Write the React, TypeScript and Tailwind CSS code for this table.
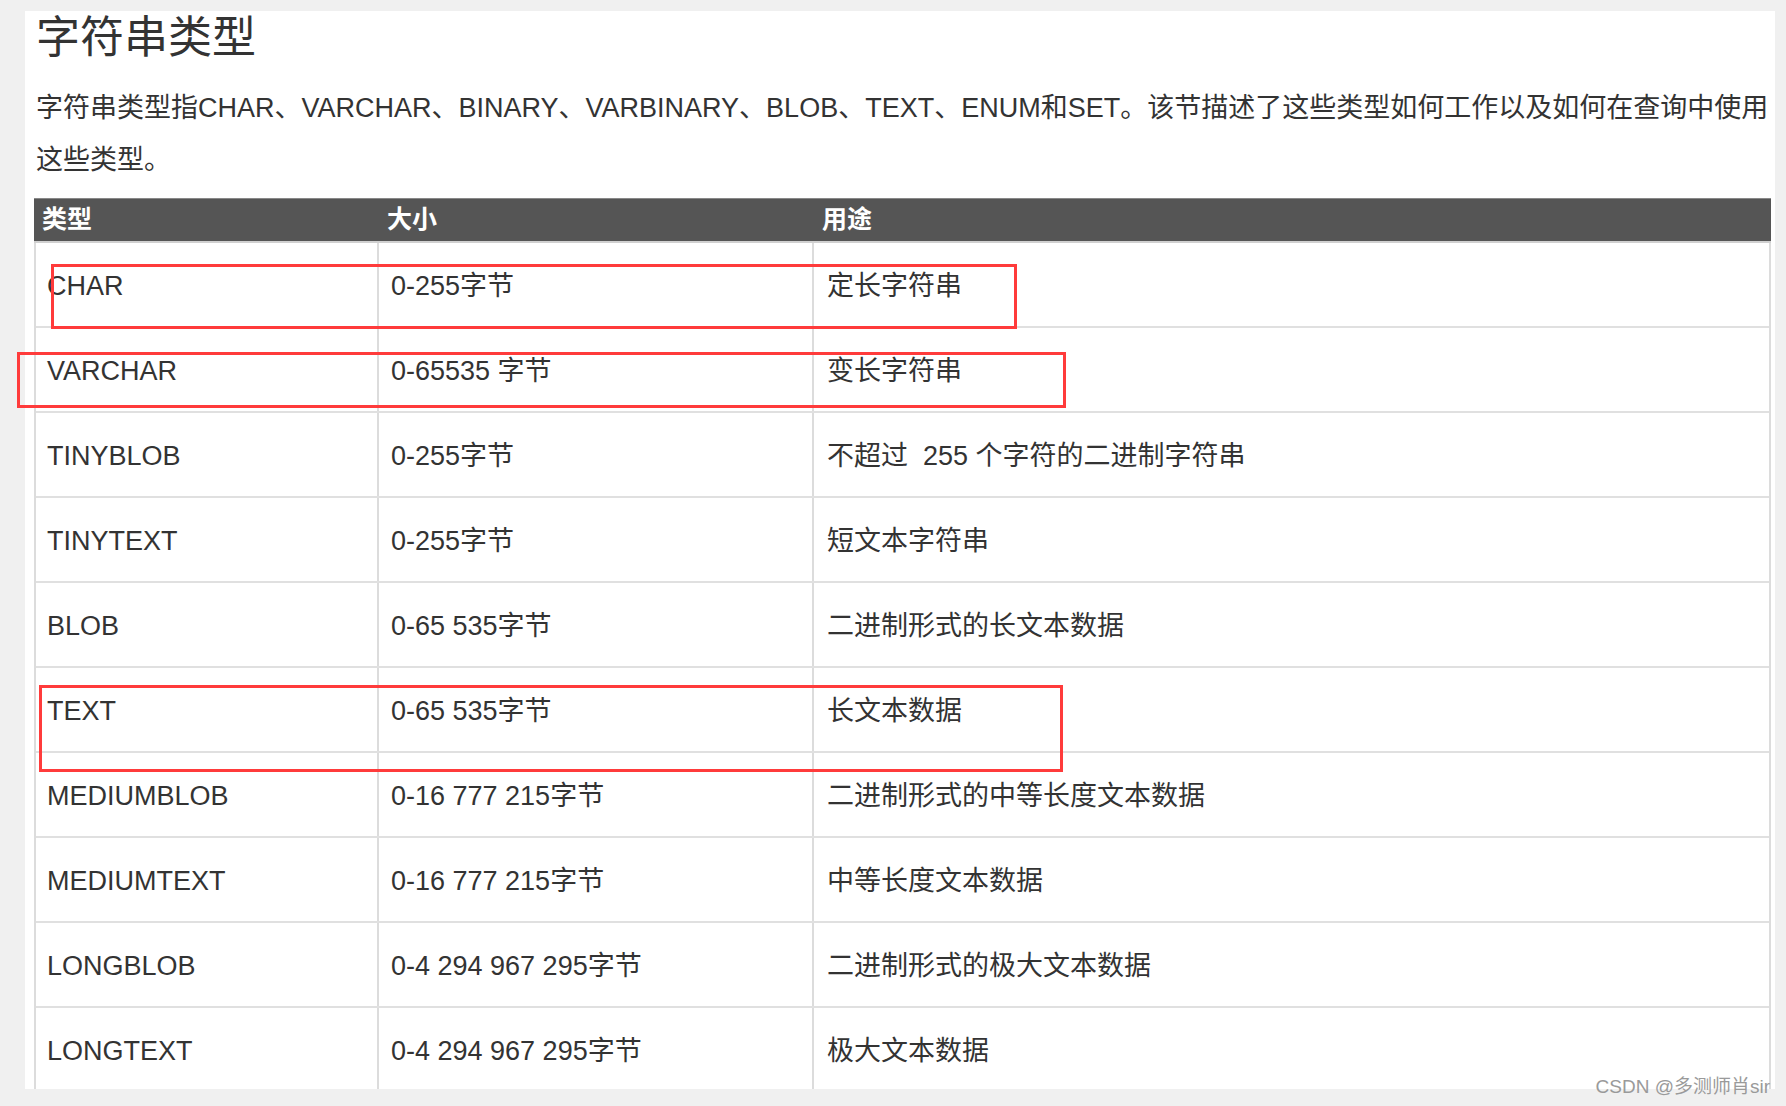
import React from 'react';

const rows: [string, string, string][] = [
  ['CHAR', '0-255字节', '定长字符串'],
  ['VARCHAR', '0-65535 字节', '变长字符串'],
  ['TINYBLOB', '0-255字节', '不超过\u00a0 255 个字符的二进制字符串'],
  ['TINYTEXT', '0-255字节', '短文本字符串'],
  ['BLOB', '0-65 535字节', '二进制形式的长文本数据'],
  ['TEXT', '0-65 535字节', '长文本数据'],
  ['MEDIUMBLOB', '0-16 777 215字节', '二进制形式的中等长度文本数据'],
  ['MEDIUMTEXT', '0-16 777 215字节', '中等长度文本数据'],
  ['LONGBLOB', '0-4 294 967 295字节', '二进制形式的极大文本数据'],
  ['LONGTEXT', '0-4 294 967 295字节', '极大文本数据'],
];

// red annotation boxes drawn over the screenshot
const marks = [
  'left-[51px] top-[264px] w-[966px] h-[65px]',
  'left-[17px] top-[352px] w-[1049px] h-[56px]',
  'left-[39px] top-[685px] w-[1024px] h-[87px]',
];

export default function App() {
  return (
    <div className="relative w-[1786px] h-[1106px] overflow-hidden bg-[#f0f0f0] font-['Liberation_Sans','Noto_Sans_CJK_SC',sans-serif] text-[#333]">
      <div className="absolute left-[25px] top-[11px] w-[1750px] h-[1078px] bg-white pl-[9px]">
        <h1 className="pl-[2px] text-[44px] leading-[46px] font-normal text-[#333] font-['Noto_Sans_CJK_SC',sans-serif]">
          字符串类型
        </h1>
        <p className="mt-[25px] pl-[2px] text-[27px] leading-[52px] text-[#333] whitespace-nowrap">
          字符串类型指CHAR、VARCHAR、BINARY、VARBINARY、BLOB、TEXT、ENUM和SET。该节描述了这些类型如何工作以及如何在查询中使用
          <br />
          这些类型。
        </p>

        {/* table is cut off at the bottom of the screenshot */}
        <div className="mt-[12px] w-[1737px] h-[891px] overflow-hidden">
          <div className="flex h-[45px] bg-[#555555] border-t border-[#888] border-b-2 border-b-[#d0d0d0] text-white font-bold text-[25px] items-center">
            <div className="w-[345px] pl-[8px]">类型</div>
            <div className="w-[435px] pl-[8px]">大小</div>
            <div className="flex-1 pl-[8px]">用途</div>
          </div>
          <div className="border-l-2 border-r-2 border-[#dcdcdc]">
            {rows.map(([type, size, use]) => (
              <div key={type} className="flex h-[85px] border-b-2 border-[#e0e0e0] text-[27px]">
                <div className="w-[343px] flex items-center pl-[11px] pt-[3px] border-r-2 border-[#dcdcdc]">{type}</div>
                <div className="w-[435px] flex items-center pl-[12px] pt-[3px] border-r-2 border-[#dcdcdc]">{size}</div>
                <div className="flex-1 flex items-center pl-[13px] pt-[3px]">{use}</div>
              </div>
            ))}
          </div>
        </div>
      </div>

      {marks.map((m) => (
        <div key={m} className={`absolute border-[3px] border-[#ff3b3b] ${m}`} />
      ))}

      <div className="absolute right-[16px] top-[1074px] text-[19px] leading-[26px] text-[#9a9a9a]">
        CSDN @多测师肖sir
      </div>
    </div>
  );
}
